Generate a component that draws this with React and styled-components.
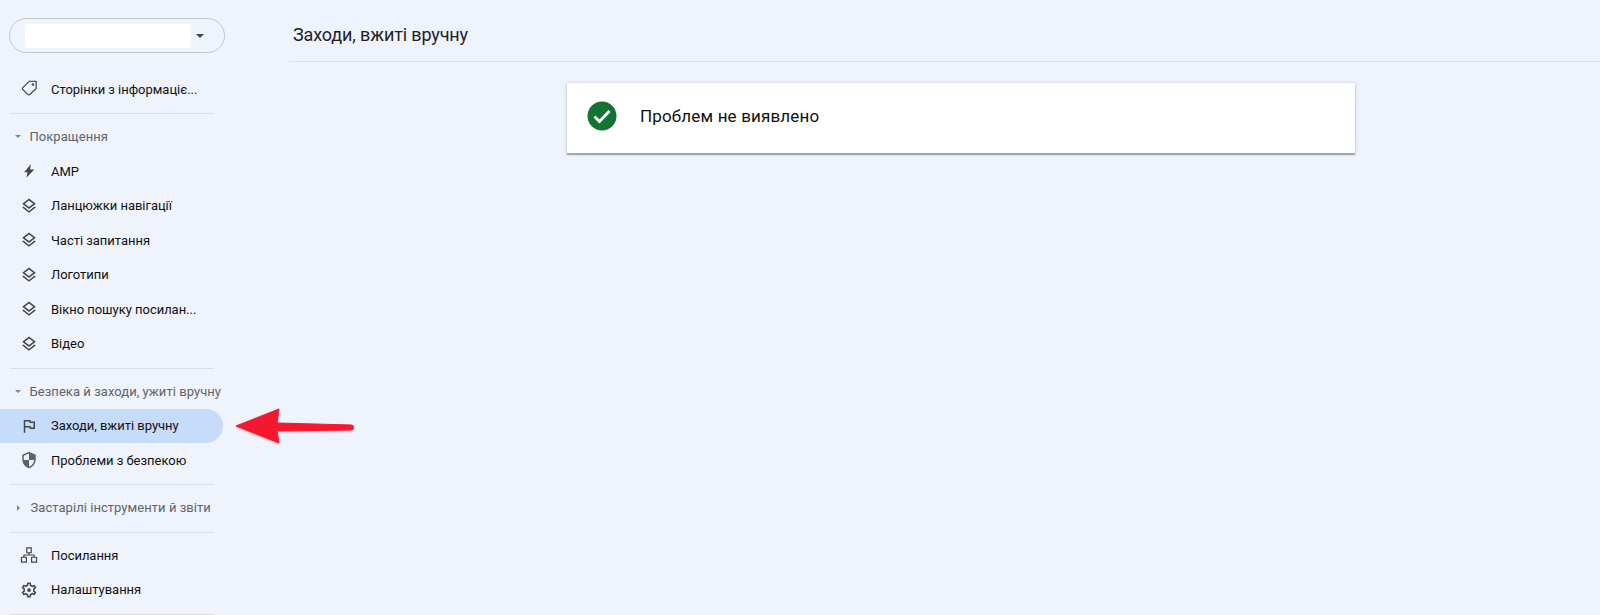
import React from "react";
import styled, { createGlobalStyle } from "styled-components";

const Global = createGlobalStyle`
  html, body { margin: 0; padding: 0; height: 615px; overflow: hidden; background: #eef3fc; }
  body { font-family: Roboto, "Noto Sans", sans-serif; }
`;
const Page = styled.div`
  position: relative;
  display: flex;
  width: 1600px;
  height: 615px;
  overflow: hidden;
  background: #eef3fc;
`;
const Sidebar = styled.nav`
  width: 289px;
  flex: none;
  padding-top: 18px;
  box-sizing: border-box;
`;
const Selector = styled.div`
  display: flex;
  align-items: center;
  justify-content: space-between;
  box-sizing: border-box;
  width: 216px;
  height: 35px;
  margin: 0 0 19px 9px;
  padding: 0 20px 0 15px;
  border: 1px solid #c4c7ca;
  border-radius: 18px;
`;
const Masked = styled.div`
  width: 166px;
  height: 24px;
  background: #fff;
  border-radius: 3px;
`;
const Caret = styled.span`
  width: 0;
  height: 0;
  border-left: 4.5px solid transparent;
  border-right: 4.5px solid transparent;
  border-top: 4.5px solid #444746;
`;
const Row = styled.div`
  display: flex;
  align-items: center;
  box-sizing: border-box;
  width: 223px;
  height: 34.5px;
  padding-left: 19.5px;
  border-radius: 0 17.25px 17.25px 0;
  background: ${(p) => (p.$active ? "#c7dbfb" : "transparent")};
  color: #111;
  font-size: 13px;
  font-weight: 400;
  letter-spacing: -0.03px;
`;
const IconBox = styled.svg`
  width: 18px;
  height: 18px;
  flex: none;
  margin-right: 13.5px;
  fill: ${(p) => (p.$muted ? "#5f6368" : "#444746")};
`;
const Divider = styled.div`
  width: 204px;
  height: 1px;
  margin: 6.5px 0 5.5px 10px;
  background: #dcdfe4;
`;
const SectionLabel = styled.div`
  display: flex;
  align-items: center;
  height: 34.5px;
  padding-left: 15px;
  color: #5f6368;
  font-size: 13px;
  font-weight: 400;
  letter-spacing: 0.05px;
  white-space: nowrap;
`;
const TriDown = styled.span`
  width: 0;
  height: 0;
  margin-right: 8.5px;
  border-left: 3.5px solid transparent;
  border-right: 3.5px solid transparent;
  border-top: 3.5px solid #80868b;
`;
const TriRight = styled.span`
  width: 0;
  height: 0;
  margin: 0 10.5px 0 2px;
  border-top: 3.5px solid transparent;
  border-bottom: 3.5px solid transparent;
  border-left: 3.5px solid #80868b;
`;
const Main = styled.main`
  flex: 1;
  min-width: 0;
`;
const Header = styled.header`
  display: flex;
  align-items: center;
  box-sizing: border-box;
  height: 62px;
  padding: 8px 0 0 4px;
  border-bottom: 1px solid #dde1e7;
  color: #1f1f1f;
  font-size: 18px;
  letter-spacing: -0.13px;
`;
const Card = styled.section`
  display: flex;
  align-items: center;
  box-sizing: border-box;
  width: 788px;
  height: 70px;
  margin: 21px 0 0 278px;
  padding: 0 0 5px 20px;
  background: #fff;
  box-shadow: 0 2px 1px rgba(60, 64, 67, 0.38), 0 0 4px rgba(60, 64, 67, 0.2);
  color: #111;
  font-size: 17px;
  font-weight: 400;
  letter-spacing: 0.15px;
`;
const Check = styled.svg`
  width: 30px;
  height: 30px;
  margin-right: 23px;
`;
const ArrowOverlay = styled.svg`
  position: absolute;
  left: 232px;
  top: 404px;
  width: 124px;
  height: 44px;
  overflow: visible;
  filter: drop-shadow(0 1px 1px rgba(120, 30, 40, 0.3));
`;

const P = {
  bolt: "M8.5 21l1.5-7.5H5.5L14.5 3l-1 7h5.5L8.5 21z",
  layers: "M11.99 18.54l-7.37-5.73L3 14.07l9 7 9-7-1.63-1.27-7.38 5.74zM12 16l7.36-5.73L21 9l-9-7-9 7 1.63 1.27L12 16zm0-11.47L17.74 9 12 13.47 6.26 9 12 4.53z",
  flag: "M12.36 6l.4 2H18v6h-3.36l-.4-2H7V6h5.36M14 4H5v17h2v-7h5.6l.4 2h7V6h-5.6L14 4z",
  shield: "M12 1L3 5v6c0 5.55 3.84 10.74 9 12 5.16-1.26 9-6.45 9-12V5l-9-4zm0 10.99h7c-.53 4.12-3.28 7.79-7 8.94V12H5V6.3l7-3.11v8.8z",
  gear: "M19.43 12.98c.04-.32.07-.64.07-.98 0-.34-.03-.66-.07-.98l2.11-1.65c.19-.15.24-.42.12-.64l-2-3.46c-.09-.16-.26-.25-.44-.25-.06 0-.12.01-.17.03l-2.49 1c-.52-.4-1.08-.73-1.69-.98l-.38-2.65C14.46 2.18 14.25 2 14 2h-4c-.25 0-.46.18-.49.42l-.38 2.65c-.61.25-1.17.59-1.69.98l-2.49-1c-.06-.02-.12-.03-.18-.03-.17 0-.34.09-.43.25l-2 3.46c-.13.22-.07.49.12.64l2.11 1.65c-.04.32-.07.65-.07.98 0 .33.03.66.07.98l-2.11 1.65c-.19.15-.24.42-.12.64l2 3.46c.09.16.26.25.44.25.06 0 .12-.01.17-.03l2.49-1c.52.4 1.08.73 1.69.98l.38 2.65c.03.24.24.42.49.42h4c.25 0 .46-.18.49-.42l.38-2.65c.61-.25 1.17-.59 1.69-.98l2.49 1c.06.02.12.03.18.03.17 0 .34-.09.43-.25l2-3.46c.12-.22.07-.49-.12-.64l-2.11-1.65zm-1.98-1.71c.04.31.05.52.05.73 0 .21-.02.43-.05.73l-.14 1.13.89.7 1.08.84-.7 1.21-1.27-.51-1.04-.42-.9.68c-.43.32-.84.56-1.25.73l-1.06.43-.16 1.13-.2 1.35h-1.4l-.19-1.35-.16-1.13-1.06-.43c-.43-.18-.83-.41-1.23-.71l-.91-.7-1.06.43-1.27.51-.7-1.21 1.08-.84.89-.7-.14-1.13c-.03-.31-.05-.54-.05-.74s.02-.43.05-.73l.14-1.13-.89-.7-1.08-.84.7-1.21 1.27.51 1.04.42.9-.68c.43-.32.84-.56 1.25-.73l1.06-.43.16-1.13.2-1.35h1.39l.19 1.35.16 1.13 1.06.43c.43.18.83.41 1.23.71l.91.7 1.06-.43 1.27-.51.7 1.21-1.07.85-.89.7.14 1.13zM12 9.5a2.5 2.5 0 1 0 0 5 2.5 2.5 0 0 0 0-5z",
};

const strokeShapes = {
  tag: (
    <>
      <path d="M21.5 1.8L13 1.6a1.5 1.5 0 0 0-1.2.5L3.6 10.4a1.4 1.4 0 0 0 0 2l7 7.2a1.4 1.4 0 0 0 2 0l8.4-7.6a1.5 1.5 0 0 0 .5-1.2z" />
      <circle cx="17.2" cy="6" r="1" />
    </>
  ),
  links: (
    <>
      <rect x="9" y="2.5" width="6" height="6.5" />
      <rect x="2" y="15" width="6.5" height="6.5" />
      <rect x="15.5" y="15" width="6.5" height="6.5" />
      <path d="M12 9v3M5.25 15v-3h13.5v3" />
    </>
  ),
};

const StrokeGroup = styled.g`
  fill: none;
  stroke: #444746;
  stroke-width: 1.6;
  stroke-linejoin: round;
`;

const Icon = ({ name }) => (
  <IconBox viewBox="0 0 24 24" aria-hidden="true" $muted={name === "shield"}>
    {strokeShapes[name] ? <StrokeGroup>{strokeShapes[name]}</StrokeGroup> : <path d={P[name]} />}
  </IconBox>
);

const Item = ({ icon, text, active }) => (
  <Row $active={active}>
    <Icon name={icon} />
    {text}
  </Row>
);

export default function App() {
  return (
    <Page>
      <Global />
      <Sidebar>
        <Selector>
          <Masked />
          <Caret />
        </Selector>
        <Item icon="tag" text="Сторінки з інформаціє..." />
        <Divider />
        <SectionLabel><TriDown />Покращення</SectionLabel>
        <Item icon="bolt" text="AMP" />
        <Item icon="layers" text="Ланцюжки навігації" />
        <Item icon="layers" text="Часті запитання" />
        <Item icon="layers" text="Логотипи" />
        <Item icon="layers" text="Вікно пошуку посилан..." />
        <Item icon="layers" text="Відео" />
        <Divider />
        <SectionLabel><TriDown />Безпека й заходи, ужиті вручну</SectionLabel>
        <Item icon="flag" text="Заходи, вжиті вручну" active />
        <Item icon="shield" text="Проблеми з безпекою" />
        <Divider />
        <SectionLabel><TriRight />Застарілі інструменти й звіти</SectionLabel>
        <Divider />
        <Item icon="links" text="Посилання" />
        <Item icon="gear" text="Налаштування" />
        <Divider />
      </Sidebar>
      <Main>
        <Header>Заходи, вжиті вручну</Header>
        <Card>
          <Check viewBox="0 0 30 30" aria-hidden="true">
            <circle cx="15" cy="15" r="14.5" fill="#137333" />
            <path d="M7.5 15.5l5 5 10-10.5" fill="none" stroke="#fff" strokeWidth="2.8" />
          </Check>
          Проблем не виявлено
        </Card>
      </Main>
      <ArrowOverlay viewBox="0 0 124 44" aria-hidden="true">
        <path d="M4 22L47 5l-2 14 74 2a2.5 2.5 0 0 1 0 5L45 27l2 12z" fill="#f4182f" stroke="#f4182f" strokeWidth="1" strokeLinejoin="round" />
      </ArrowOverlay>
    </Page>
  );
}
